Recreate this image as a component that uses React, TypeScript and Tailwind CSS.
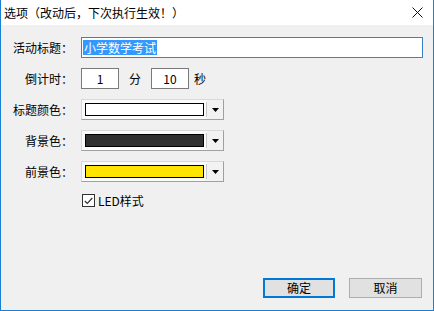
import React from 'react';

const font = { fontFamily: '"Noto Sans CJK SC", "Noto Sans", sans-serif' };

const Label = ({ text }: { text: string }) => (
  <div className="w-[72px] shrink-0 text-right text-[12px] leading-[21px] text-[#000]">{text}</div>
);

const ColorCombo = ({ color }: { color: string }) => (
  <div className="flex h-[21px] w-[143px] items-stretch border border-[#d9d9d9] border-b-[#a0a0a0] border-r-[#a0a0a0] bg-[#fbfbfb]">
    <div className="flex flex-1 items-center pl-[3px] pr-[2px]">
      <div className="h-[13px] w-full border border-black" style={{ backgroundColor: color }} />
    </div>
    <div className="my-[2px] w-px bg-[#c8c8c8]" />
    <div className="flex w-[16px] items-center justify-center bg-[#f2f2f2]">
      <svg width="7" height="4" viewBox="0 0 7 4">
        <path d="M0 0H7L3.5 4Z" fill="#000" />
      </svg>
    </div>
  </div>
);

export default function App() {
  return (
    <div className="flex h-[311px] w-[434px] flex-col border-x border-b border-[#1a80d4] bg-[#f0f0f0] text-black" style={font}>
      {/* title bar */}
      <div className="flex h-[25px] shrink-0 items-center justify-between bg-white pl-[3px] pr-[10px]">
        <span className="text-[12px] leading-none text-[#000]">选项（改动后，下次执行生效！）</span>
        <svg width="11" height="11" viewBox="0 0 11 11">
          <path d="M0.5 0.5L10.5 10.5M10.5 0.5L0.5 10.5" stroke="#111" strokeWidth="1" />
        </svg>
      </div>

      <div className="flex flex-1 flex-col pt-[12px] pb-[12px]">
        <div className="flex flex-col gap-[10px]">
          <div className="flex items-center gap-[8px]">
            <Label text="活动标题：" />
            <div className="flex h-[21px] w-[342px] items-center border border-[#3b83c6] bg-white pl-[1px]">
              <span className="bg-[#3399ff] px-[1px] text-[12px] leading-[15px] text-white">小学数学考试</span>
            </div>
          </div>

          <div className="flex items-center gap-[8px]">
            <Label text="倒计时：" />
            <div className="flex h-[21px] w-[38px] items-center justify-center border border-[#7a7a7a] bg-white text-[12px]">1</div>
            <span className="ml-[2px] text-[12px]">分</span>
            <div className="ml-[2px] flex h-[21px] w-[38px] items-center justify-center border border-[#7a7a7a] bg-white text-[12px]">10</div>
            <span className="-ml-[3px] text-[12px]">秒</span>
          </div>

          <div className="flex items-center gap-[8px]">
            <Label text="标题颜色：" />
            <ColorCombo color="#ffffff" />
          </div>

          <div className="flex items-center gap-[8px]">
            <Label text="背景色：" />
            <ColorCombo color="#303030" />
          </div>

          <div className="flex items-center gap-[8px]">
            <Label text="前景色：" />
            <ColorCombo color="#ffe400" />
          </div>
        </div>

        <div className="mt-[12px] flex items-center gap-[3px] pl-[81px]">
          <div className="flex h-[13px] w-[13px] items-center justify-center border border-[#333] bg-white">
            <svg width="9" height="8" viewBox="0 0 9 8">
              <path d="M0.8 4L3.3 6.5L8.3 1" stroke="#333" strokeWidth="1.2" fill="none" />
            </svg>
          </div>
          <span className="text-[12px] leading-[13px]">LED样式</span>
        </div>

        <div className="mt-auto flex justify-end gap-[14px] pr-[11px]">
          <button className="h-[20px] w-[72px] border-2 border-[#0078d7] bg-[#e1e1e1] text-[12px] leading-none">确定</button>
          <button className="h-[20px] w-[73px] border border-[#adadad] bg-[#e1e1e1] text-[12px] leading-none">取消</button>
        </div>
      </div>
    </div>
  );
}
